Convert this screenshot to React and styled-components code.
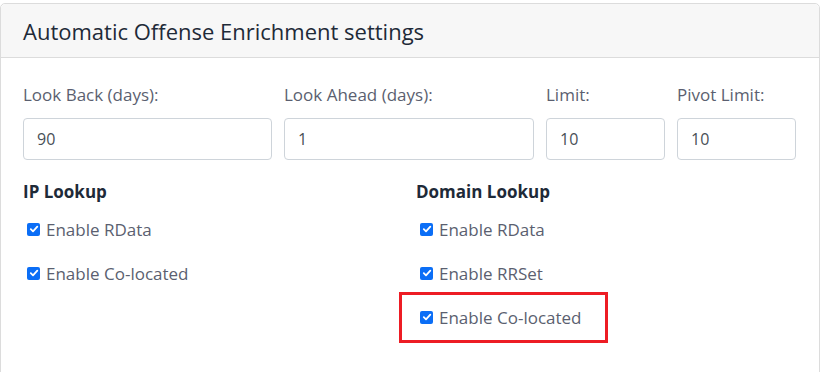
import React from "react";
import styled, { createGlobalStyle } from "styled-components";

const GlobalStyle = createGlobalStyle`
    body {
        margin: 0;
        padding-top: 3px;
        background: #ffffff;
        font-family: "Open Sans", "Noto Sans", sans-serif;
    }
`;

function CheckItem({ label, highlighted }) {
    return (
        <Check highlighted={highlighted}>
            <Box>
                <svg width="10" height="10" viewBox="0 0 10 10">
                    <path d="M1.8 5.2 L4 7.3 L8.3 2.6" fill="none" stroke="#fff" strokeWidth="1.8" strokeLinecap="round" strokeLinejoin="round" />
                </svg>
            </Box>
            <span>{label}</span>
        </Check>
    );
}

function App() {
    const fields = [
        { label: "Look Back (days):", value: "90" },
        { label: "Look Ahead (days):", value: "1" },
        { label: "Limit:", value: "10" },
        { label: "Pivot Limit:", value: "10" },
    ];

    return (
        <>
            <GlobalStyle />
            <Card>
                <Header>Automatic Offense Enrichment settings</Header>
                <Body>
                    <Fields>
                        {fields.map((f) => (
                            <Field key={f.label}>
                                <Label>{f.label}</Label>
                                <Input>{f.value}</Input>
                            </Field>
                        ))}
                    </Fields>
                    <Lookups>
                        <div>
                            <Heading>IP Lookup</Heading>
                            <CheckItem label="Enable RData" />
                            <CheckItem label="Enable Co-located" />
                        </div>
                        <div>
                            <Heading>Domain Lookup</Heading>
                            <CheckItem label="Enable RData" />
                            <CheckItem label="Enable RRSet" />
                            <CheckItem label="Enable Co-located" highlighted />
                        </div>
                    </Lookups>
                </Body>
            </Card>
        </>
    );
}

const Card = styled.div`
    width: 820px;
    box-sizing: border-box;
    border: 1px solid #dcdcdc;
    border-radius: 5px;
    min-height: 380px;
`;

const Header = styled.div`
    height: 54px;
    box-sizing: border-box;
    background: #f7f7f7;
    border-bottom: 1px solid #dcdcdc;
    border-radius: 5px 5px 0 0;
    padding: 1px 22px 0;
    display: flex;
    align-items: center;
    font-size: 22px;
    color: #1e2a38;
`;

const Body = styled.div`
    padding: 25px 22px;
`;

const Fields = styled.div`
    display: grid;
    grid-template-columns: 249px 250px 119px 119px;
    column-gap: 12px;
`;

const Field = styled.div`
    display: flex;
    flex-direction: column;
`;

const Label = styled.div`
    font-size: 17px;
    color: #5b5f70;
    line-height: 24px;
    margin-bottom: 11px;
`;

const Input = styled.div`
    height: 42px;
    box-sizing: border-box;
    border: 1px solid #ced4da;
    border-radius: 4px;
    padding: 0 13px;
    display: flex;
    align-items: center;
    font-size: 16px;
    color: #495057;
`;

const Lookups = styled.div`
    display: grid;
    grid-template-columns: 380px 380px;
    column-gap: 13px;
    margin-top: 20px;
`;

const Heading = styled.div`
    font-size: 17px;
    font-weight: 700;
    color: #1e2a38;
    line-height: 24px;
    margin-bottom: 13px;
`;

const Check = styled.div`
    position: relative;
    display: flex;
    align-items: center;
    gap: 6px;
    height: 24px;
    margin-bottom: 20px;
    margin-top: ${(p) => (p.highlighted ? "2px" : "0")};
    padding-left: 4px;
    font-size: 17px;
    color: #5b5f70;

    &::after {
        content: "";
        display: ${(p) => (p.highlighted ? "block" : "none")};
        position: absolute;
        left: -17px;
        top: -13px;
        width: 209px;
        height: 51px;
        box-sizing: border-box;
        border: 3px solid #ed1c24;
    }
`;

const Box = styled.span`
    width: 13px;
    height: 13px;
    border-radius: 2px;
    background: #0b6ef6;
    display: flex;
    align-items: center;
    justify-content: center;
`;

export default App;
